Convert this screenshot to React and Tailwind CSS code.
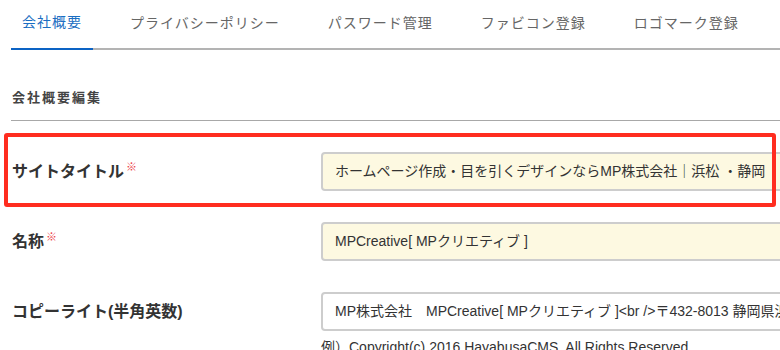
const tabs = ["会社概要", "プライバシーポリシー", "パスワード管理", "ファビコン登録", "ロゴマーク登録"];

const font = { fontFamily: '"Liberation Sans", "Noto Sans CJK JP", sans-serif' };

function Field({ label, required, value, filled, note }) {
  return (
    <div className="flex items-start">
      <div className="w-[310px] h-[39px] flex items-center pl-[1px] text-[16px] font-bold text-[#333]">
        <span>{label}</span>
        {required && (
          <span className="text-[11px] text-[#ec3f4a] self-start mt-[7px] ml-[2px] font-normal">※</span>
        )}
      </div>
      <div className="w-[640px]">
        <div
          className={`h-[39px] flex items-center px-[12px] border-2 border-[#cdcdcd] rounded-[4px] text-[14px] text-[#333] whitespace-nowrap overflow-hidden ${
            filled ? "bg-[#fdf9e1]" : "bg-white"
          }`}
        >
          {value}
        </div>
        {note && <p className="mt-[6px] text-[14px] leading-[20px] text-[#333]">{note}</p>}
      </div>
    </div>
  );
}

export default function App() {
  return (
    <div className="relative w-[780px] h-[350px] overflow-hidden bg-white" style={font}>
      <div className="w-[1000px] pl-[11px]">
        <div className="flex gap-[26px] border-b-2 border-[#b3b3b3] h-[50px]">
          {tabs.map((t, i) => (
            <div
              key={t}
              className={`h-[50px] flex items-center pb-[3px] px-[11px] text-[14px] tracking-[1px] ${
                i === 0 ? "text-[#1b6ec2] border-b-2 border-[#0c63c4]" : "text-[#666]"
              }`}
            >
              {t}
            </div>
          ))}
        </div>

        <div className="pt-[38px] pb-[12px] border-b border-[#a8a8a8]">
          <h2 className="text-[13px] leading-[20px] font-bold tracking-[2px] text-[#444] pl-[1px]">会社概要編集</h2>
        </div>

        <div className="pt-[31px] flex flex-col gap-[31px]">
          <Field
            label="サイトタイトル"
            required
            filled
            value="ホームページ作成・目を引くデザインならMP株式会社｜浜松 ・静岡"
          />
          <Field label="名称" required filled value="MPCreative[ MPクリエティブ ]" />
          <Field
            label="コピーライト(半角英数)"
            value="MP株式会社　MPCreative[ MPクリエティブ ]<br />〒432-8013 静岡県浜松市中区広沢"
            note="例）Copyright(c) 2016 HayabusaCMS. All Rights Reserved."
          />
        </div>
      </div>

      <div className="absolute left-[4px] top-[133px] w-[772px] h-[74px] border-4 border-[#ff2d20] rounded-[3px]" />
    </div>
  );
}
